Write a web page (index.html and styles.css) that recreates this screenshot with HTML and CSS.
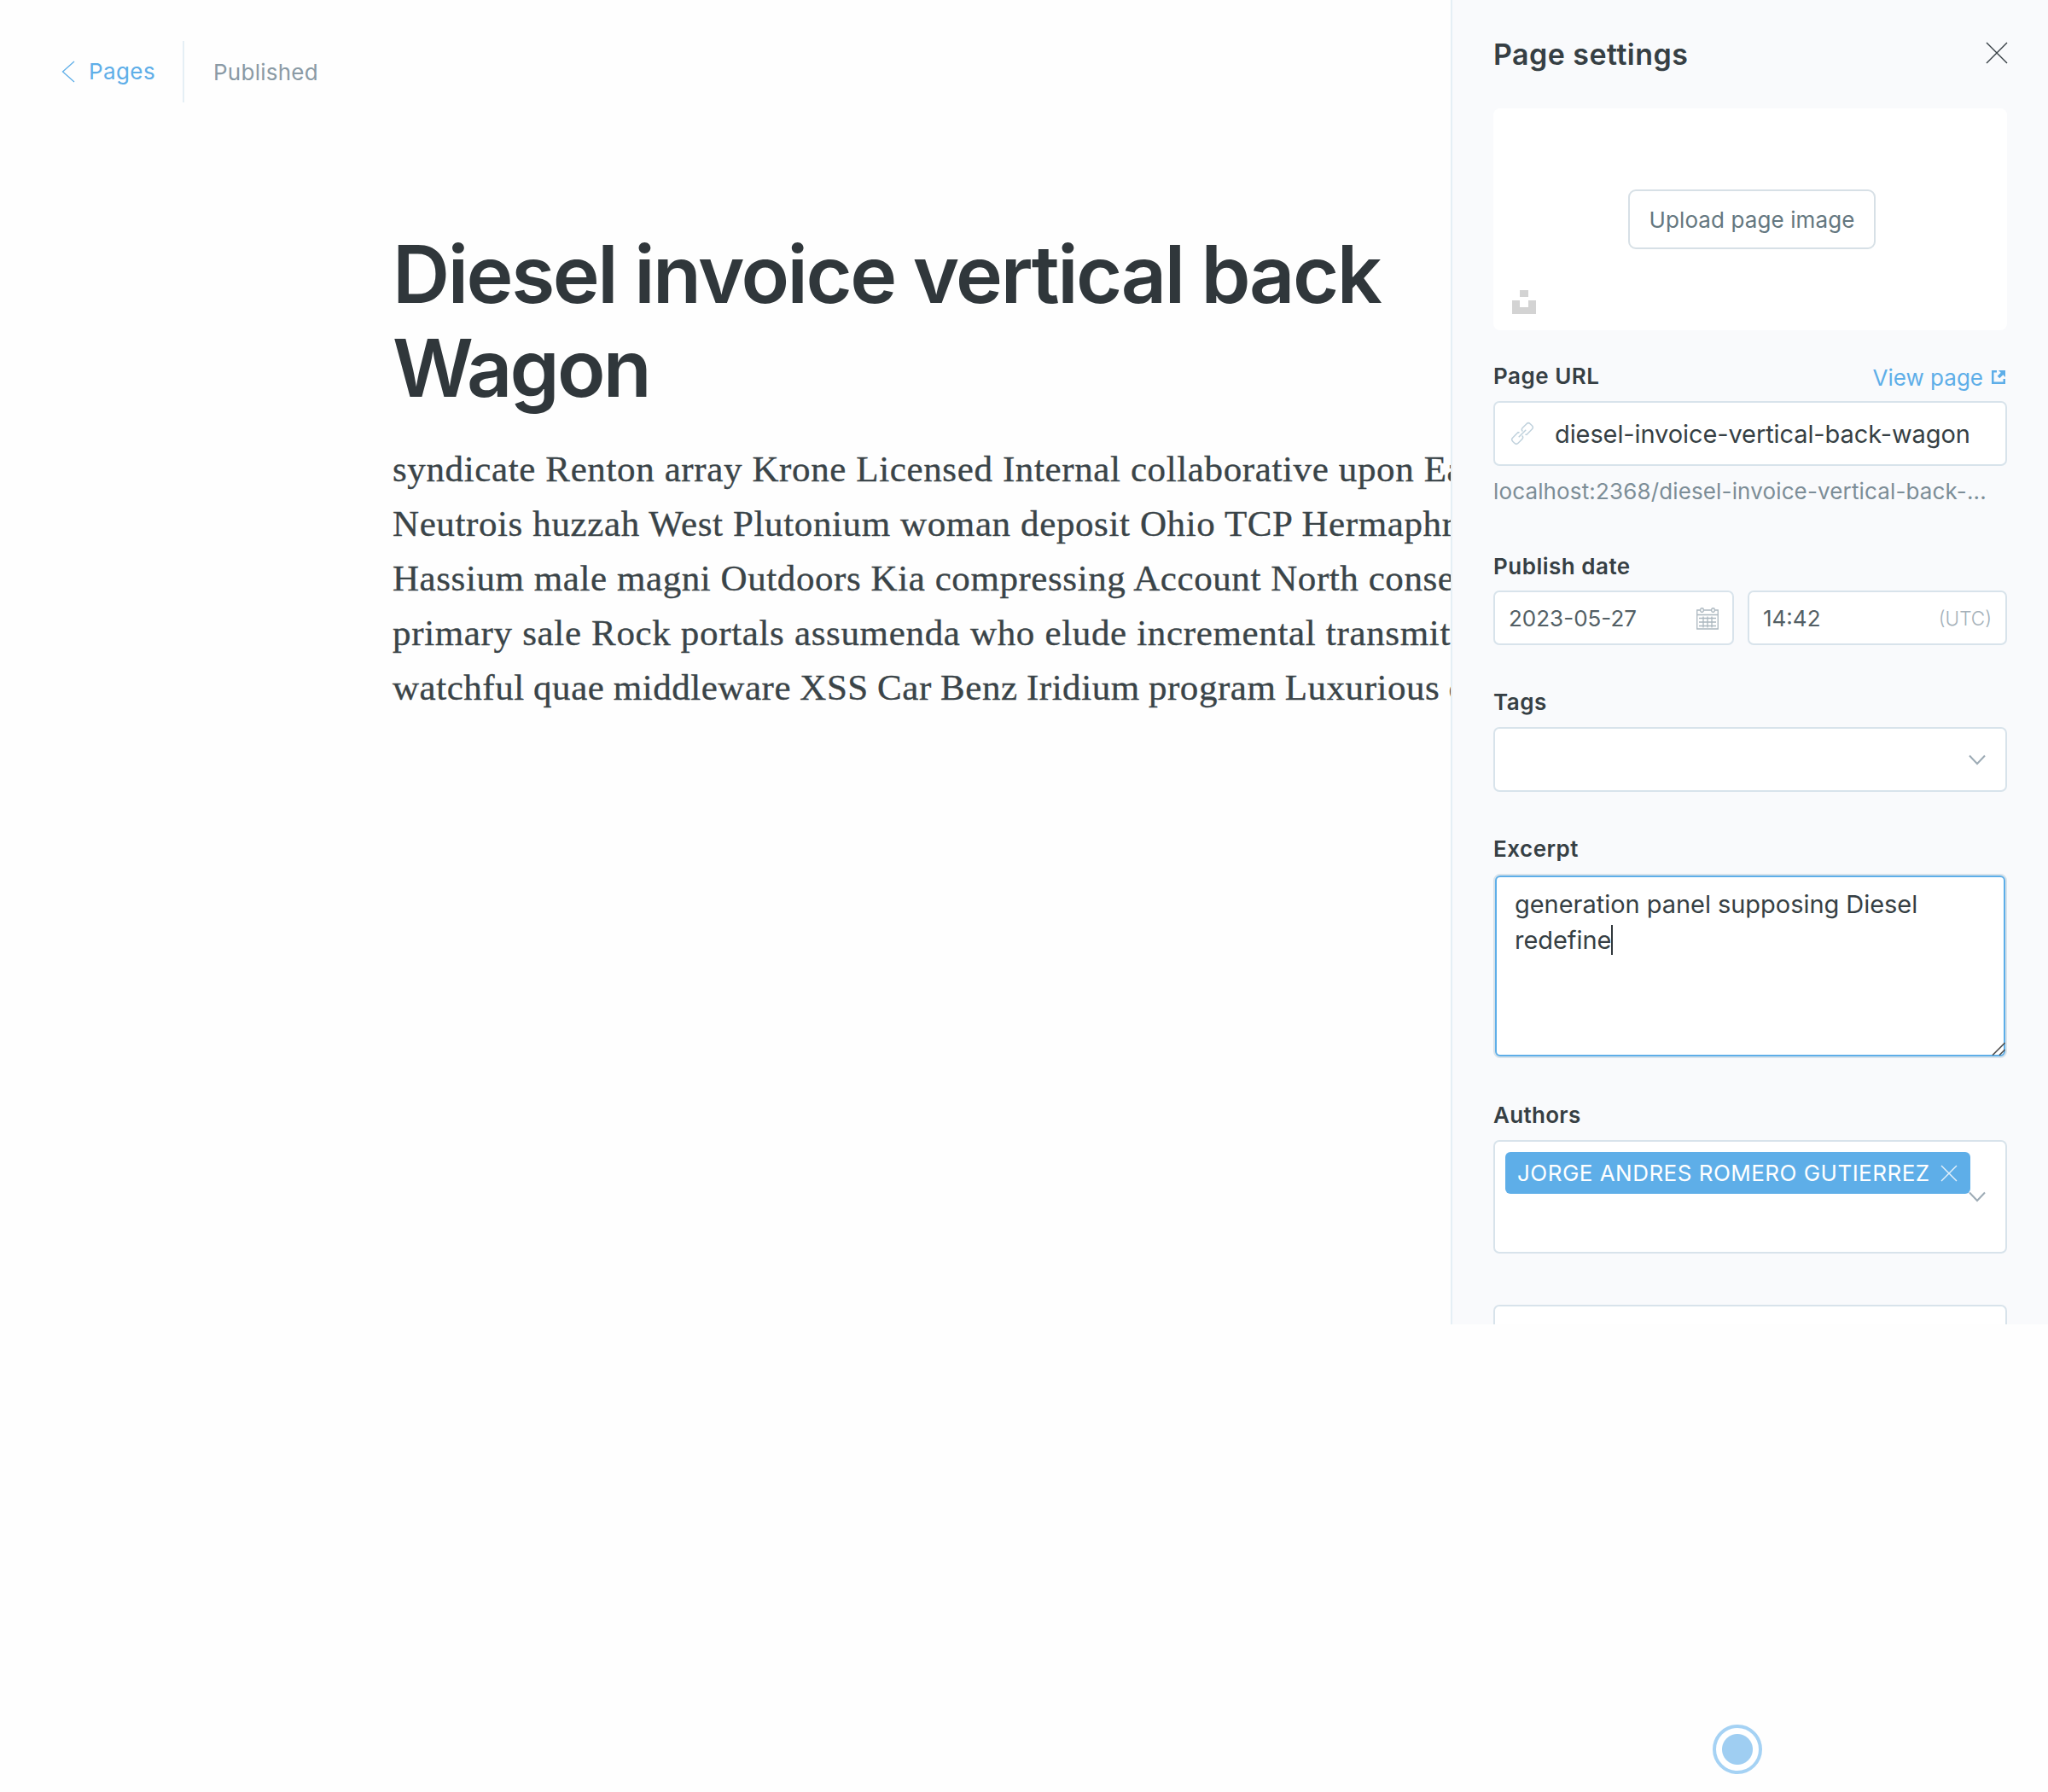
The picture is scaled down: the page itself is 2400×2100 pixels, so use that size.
FILE: index.html
```
<!DOCTYPE html>
<html lang="en">
<head>
<meta charset="utf-8">
<title>Page settings</title>
<link rel="stylesheet" href="styles.css">
</head>
<body>
<div class="app">
  <main class="editor">
    <header class="editor-header">
      <a class="back">
        <svg class="back-icon" width="16" height="26" viewBox="0 0 16 26"><path d="M15 1 1.500 13 15 25"/></svg>
        <span class="back-text">Pages</span>
      </a>
      <span class="status">Published</span>
    </header>
    <article class="post">
      <h1 class="post-title">Diesel invoice vertical back<br><span class="title-end">Wagon</span></h1>
      <p class="post-body">
        <span class="line l1">syndicate Renton array Krone Licensed Internal collaborative upon Earth</span>
        <span class="line l2">Neutrois huzzah West Plutonium woman deposit Ohio TCP Hermaphrodite</span>
        <span class="line l3">Hassium male magni Outdoors Kia compressing Account North consequatur</span>
        <span class="line l4">primary sale Rock portals assumenda who elude incremental transmitting</span>
        <span class="line l5">watchful quae middleware XSS Car Benz Iridium program Luxurious of</span>
      </p>
    </article>
  </main>

  <aside class="panel">
    <div class="panel-head">
      <h2 class="panel-title">Page settings</h2>
      <svg class="close" width="26" height="26" viewBox="0 0 26 26"><path d="M1 1 25 25M25 1 1 25"/></svg>
    </div>

    <div class="upload">
      <button class="upload-btn">Upload page image</button>
      <svg class="unsplash" width="28" height="28" viewBox="0 0 28 28"><path d="M9 0h10v8H9zM0 12h9v8h10v-8h9v16H0z"/></svg>
    </div>

    <div class="label-row">
      <span class="label">Page URL</span>
      <a class="view">View page
        <svg width="16" height="16" viewBox="0 0 16 16"><path d="M6 1.250H1.250V14.750H14.750V10" fill="none" stroke="currentColor" stroke-width="2.500"/><path d="M8 0h8v8l-2.700-2.700-4 4-2.600-2.600 4-4z" fill="currentColor"/></svg>
      </a>
    </div>
    <div class="box url">
      <svg class="link" width="26" height="26" viewBox="0 0 26 26"><g transform="rotate(-45 13 13)"><path d="M11 8.500H1.500a3 3 0 0 0-3 3v3a3 3 0 0 0 3 3H8a3 3 0 0 0 3-3M15 17.500h9.500a3 3 0 0 0 3-3v-3a3 3 0 0 0-3-3H18a3 3 0 0 0-3 3M7 13h12M11 8.500v1.500M15 17.500V16"/></g></svg>
      <span class="url-text">diesel-invoice-vertical-back-wagon</span>
    </div>
    <div class="help">localhost:2368/diesel-invoice-vertical-back-...</div>

    <div class="label date-label">Publish date</div>
    <div class="date-row">
      <div class="box date"><span>2023-05-27</span>
        <svg class="calendar" width="26" height="26" viewBox="0 0 26 26"><path d="M4.500 3H.75v22h24.500V3H21.500M8.500 3h9M.75 8.500h24.500M3 12.500h20M3 17h20M3 21.500h20M8 10.500v13M13 10.500v13M18 10.500v13"/><rect x="4.700" y=".75" width="3.600" height="4.500" rx="1.500"/><rect x="17.700" y=".75" width="3.600" height="4.500" rx="1.500"/></svg>
      </div>
      <div class="box time"><span>14:42</span><span class="utc">(UTC)</span></div>
    </div>

    <div class="label tags-label">Tags</div>
    <div class="box select"><svg class="chevron" width="20" height="13" viewBox="0 0 20 13"><path d="M1 1.500 10 11 19 1.500"/></svg></div>

    <div class="label excerpt-label">Excerpt</div>
    <div class="textarea">
      <div class="textarea-inner">generation panel supposing Diesel<br>redefine<i class="caret"></i></div>
      <svg class="grip" width="16" height="16" viewBox="0 0 16 16"><path d="M1 15.500 15.500 1M9 15.500 15.500 9"/></svg>
    </div>

    <div class="label authors-label">Authors</div>
    <div class="box authors">
      <span class="chip"><span>JORGE ANDRES ROMERO GUTIERREZ</span>
        <svg width="20" height="20" viewBox="0 0 20 20"><path d="M1 1 19 19M19 1 1 19"/></svg>
      </span>
      <svg class="chevron authors-chevron" width="20" height="13" viewBox="0 0 20 13"><path d="M1 1.500 10 11 19 1.500"/></svg>
    </div>

    <div class="box next"></div>
  </aside>
</div>
<div class="pointer"></div>
</body>
</html>
```
FILE: styles.css
```
* { box-sizing: border-box; }
body {
  margin: 0;
  width: 2400px;
  height: 2100px;
  overflow: hidden;
  position: relative;
  background: #fefefe;
  color: #394047;
  font: 400 26px/32px Inter, "Liberation Sans", sans-serif;
}
svg { display: block; flex: none; fill: none; }
.app { display: grid; grid-template-columns: 1700px 700px; height: 1552px; overflow: hidden; }

/* Editor */
.editor { overflow: hidden; }
.editor-header { display: flex; align-items: center; padding: 48px 0 0 72px; height: 120px; }
.back {
  display: flex; align-items: center; gap: 16px;
  width: 144px; height: 72px;
  border-right: 2px solid #e5eff5;
  color: #5eaee8; letter-spacing: 0.4px;
}
.back-icon { stroke: #5eaee8; stroke-width: 1.3; }
.status { margin-left: 34px; padding-top: 1px; color: #8a9aa5; letter-spacing: 0.25px; }
.post { padding: 146px 0 0 460px; white-space: nowrap; }
.post-title { margin: 0; color: #30373b; font-size: 93px; font-weight: 600; line-height: 110px; letter-spacing: -2.45px; }
.title-end { letter-spacing: -2.8px; }
.post-body {
  margin: 32px 0 0; font: 43px/64px Georgia, "Liberation Serif", serif; color: #3a4448;
  -webkit-text-stroke: 0.35px #3a4448;
}
.line { display: block; }
.l1 { letter-spacing: 0.62px; }
.l2 { letter-spacing: 0.61px; }
.l3 { letter-spacing: 0.57px; }
.l4 { letter-spacing: 0.66px; }
.l5 { letter-spacing: 0.54px; word-spacing: -1px; }

/* Settings panel */
.panel { padding: 44px 48px 0; background: #f9fafc; border-left: 2px solid #e5eff5; overflow: hidden; color: #363f44; }
.panel-head { display: flex; justify-content: space-between; height: 40px; }
.panel-title { margin: 0; font-size: 34px; line-height: 40px; font-weight: 600; letter-spacing: 0.45px; }
.close { margin: 5px -1px 0 0; stroke: #363f44; stroke-width: 1.4; }
.upload {
  position: relative; display: flex; justify-content: center;
  height: 260px; margin-top: 43px; padding: 95px 0 0 4px;
  background: #fff; border-radius: 8px;
}
.upload-btn {
  width: 290px; height: 70px; padding: 2px 0 0;
  border: 2px solid #d7e0e6; border-radius: 9px; background: #fff;
  color: #647780; font: inherit; letter-spacing: 0.1px;
}
.unsplash { position: absolute; left: 22px; bottom: 19px; fill: #d3d3d3; }
.label { font-weight: 600; letter-spacing: 0.5px; }
.label-row { display: flex; justify-content: space-between; height: 36px; margin-top: 38px; }
.view { display: flex; gap: 10px; padding-right: 2px; color: #5eaee8; line-height: 36px; }
.view svg { margin-top: 9px; }
.box { display: flex; align-items: center; background: #fff; border: 2px solid #d8e3eb; border-radius: 7px; }
.url { height: 76px; margin-top: 9px; padding-left: 19px; gap: 25px; }
.url-text { padding-top: 1px; font-size: 29px; letter-spacing: -0.1px; }
.link { stroke: #c0d2dd; stroke-width: 1.5; overflow: visible; }
.help { margin-top: 14px; color: #7c8d97; letter-spacing: 0.14px; white-space: nowrap; }
.date-label { margin-top: 56px; }
.date-row { display: grid; grid-template-columns: 282px 304px; gap: 16px; margin-top: 12px; color: #535f65; }
.date, .time { height: 64px; padding: 1px 16px 0; justify-content: space-between; }
.calendar { stroke: #abb7bf; stroke-width: 1.3; }
.utc { color: #a5b1b9; font-size: 22.5px; font-weight: 300; }
.tags-label { margin-top: 51px; }
.select { height: 76px; margin-top: 13px; padding-right: 23px; justify-content: flex-end; }
.chevron { stroke: #9dabb5; stroke-width: 2; }
.excerpt-label { margin-top: 51px; }
.textarea {
  position: relative; height: 216px; margin-top: 13px;
  border: 2px solid #d8e3eb; border-radius: 8px; background: #5eaee8; padding: 2px;
}
.textarea-inner { height: 100%; padding: 11px 20px 0 21px; background: #fff; border-radius: 4px; font-size: 29px; line-height: 42px; letter-spacing: -0.04px; }
.caret { display: inline-block; width: 2px; height: 35px; margin: -10px 0 -8px -1px; background: #30373b; vertical-align: 1px; }
.grip { position: absolute; right: 0; bottom: 1px; stroke: #555; stroke-width: 1.7; }
.authors-label { margin-top: 51px; letter-spacing: 0.3px; }
.authors { position: relative; align-items: flex-start; height: 133px; margin-top: 13px; padding: 12px; }
.chip {
  display: flex; align-items: center; justify-content: space-between;
  width: 545px; height: 49px; padding: 0 15px 0 14px;
  border-radius: 6px; background: #5eaee8; color: #fff; letter-spacing: 0.48px; white-space: nowrap;
}
.chip svg { stroke: #fff; stroke-width: 1.4; opacity: 0.85; }
.authors-chevron { position: absolute; right: 23px; top: 58px; }
.next { height: 76px; margin-top: 60px; }

/* Pointer marker */
.pointer {
  position: absolute; left: 2007px; top: 2021px; width: 58px; height: 58px;
  border: 4px solid #a5d2f4; border-radius: 50%;
  background: radial-gradient(circle, #9fcef2 17.5px, #fff 18.5px);
}
```
